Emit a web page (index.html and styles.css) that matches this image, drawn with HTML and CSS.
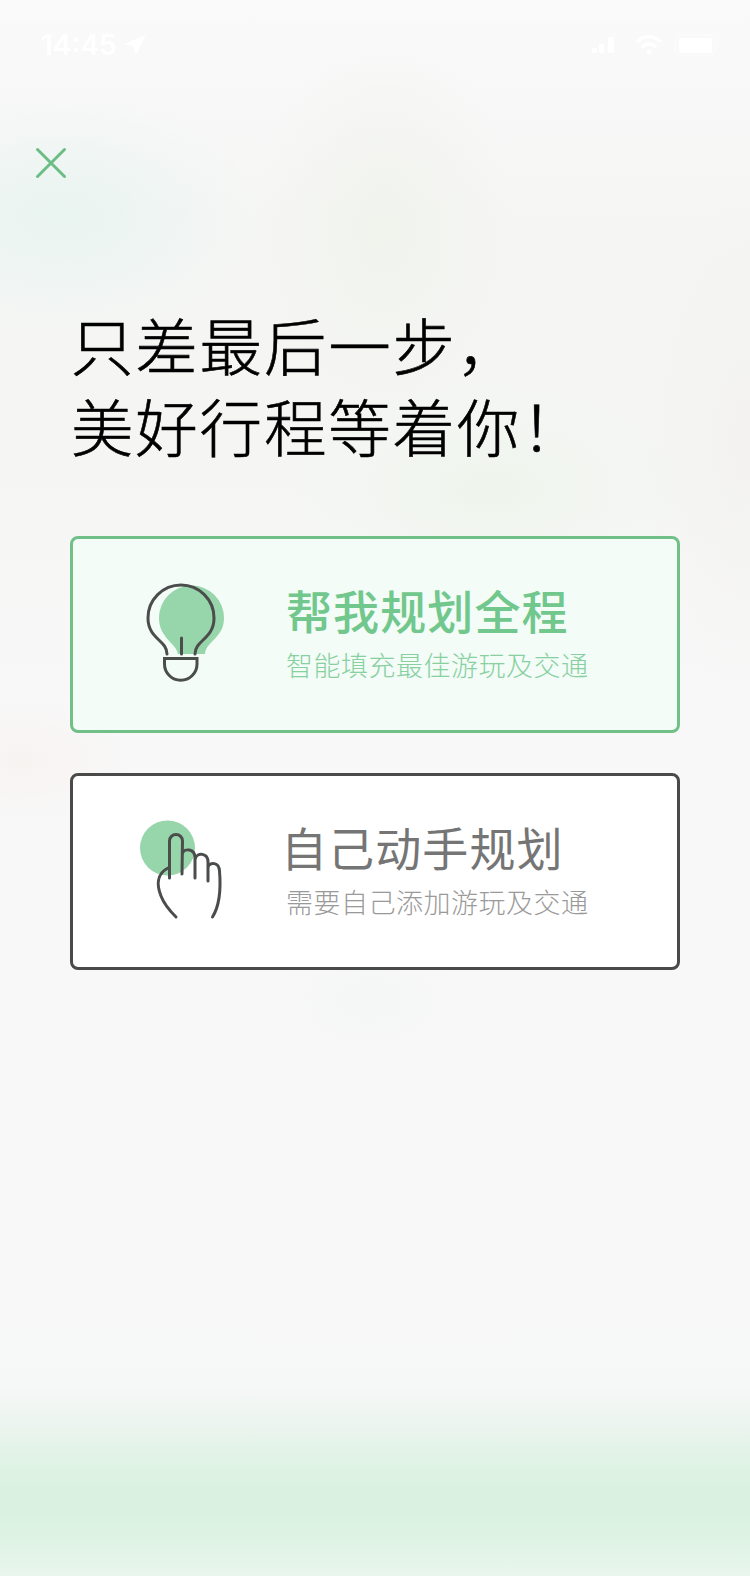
FILE: index.html
```html
<!DOCTYPE html>
<html lang="zh-CN">
<head>
    <meta charset="UTF-8">
    <meta name="viewport" content="width=device-width, initial-scale=1.0">
    <title>行程规划</title>
    <link rel="stylesheet" href="styles.css">
</head>
<body>
    <div class="page">
        <header class="status-bar">
            <div class="status-left">
                <span class="time">14:45</span>
                <svg class="location" width="22" height="21" viewBox="0 0 22 21">
                    <path d="M22 0 L0 9 L9 11 L12 20 Z" fill="#fff"/>
                </svg>
            </div>
            <div class="status-right">
                <svg width="26" height="16" viewBox="0 0 26 16" fill="#fff">
                    <rect x="0" y="11" width="5" height="5" rx="1"/>
                    <rect x="7" y="7" width="5" height="9" rx="1"/>
                    <rect x="16" y="0" width="6" height="16" rx="1"/>
                </svg>
                <svg width="26" height="20" viewBox="0 0 26 20" fill="none" stroke="#fff" stroke-width="3.5">
                    <path d="M1 7 Q13 -4 25 7"/>
                    <path d="M6 12 Q13 6 20 12"/>
                    <circle cx="13" cy="17" r="1.5" fill="#fff" stroke-width="2"/>
                </svg>
                <svg class="battery" width="46" height="22" viewBox="0 0 46 22">
                    <rect x="1" y="1" width="40" height="20" rx="5" fill="none" stroke="#fbfbfb" stroke-width="2"/>
                    <rect x="5" y="4" width="33" height="15" rx="2" fill="#fff"/>
                    <rect x="43" y="8" width="2" height="6" rx="1" fill="#fbfbfb"/>
                </svg>
            </div>
        </header>

        <button class="close" aria-label="关闭">
            <svg width="32" height="32" viewBox="0 0 32 32" fill="none" stroke="#6bbd85" stroke-width="3" stroke-linecap="round">
                <path d="M2.5 2.5 L29.5 29.5 M29.5 2.5 L2.5 29.5"/>
            </svg>
        </button>

        <h1>只差最后一步，<br>美好行程等着你！</h1>

        <div class="options">
            <div class="card active">
                <svg class="icon" width="100" height="110" viewBox="0 0 100 110" fill="none">
                    <!-- 灯泡 -->
                    <path d="M42 77 C41 67 23 61 23 41 A32.5 32.5 0 0 1 88 41 C88 61 70 64 69 77 Z" fill="#97d5aa"/>
                    <path d="M31 77 C31 63 12 62 12 41 A33 33 0 0 1 78 41 C78 62 59 63 59 77" stroke="#4a4d4b" stroke-width="3" stroke-linecap="round"/>
                    <path d="M45.500 61 V77" stroke="#4a4d4b" stroke-width="3" stroke-linecap="round"/>
                    <path d="M28.500 81.500 H61 V87 A16.250 16.250 0 0 1 28.500 87 Z" fill="#f3fcf7" stroke="#4a4d4b" stroke-width="3"/>
                </svg>
                <div class="card-text">
                    <h2>帮我规划全程</h2>
                    <p>智能填充最佳游玩及交通</p>
                </div>
            </div>

            <div class="card manual">
                <svg class="icon" width="100" height="110" viewBox="0 0 100 110" fill="none">
                    <!-- 手指 -->
                    <circle cx="31.500" cy="38" r="27.500" fill="#97d5aa"/>
                    <g stroke="#4a4d4b" stroke-width="3" stroke-linecap="round">
                        <path d="M33.500 68 V31 A6.500 6.500 0 0 1 46.500 31 L46 64"/>
                        <path d="M46.500 43 C48 38.500 59 38 59 48 V68"/>
                        <path d="M59.500 48 C61 42.500 72 42.500 72 52 V71"/>
                        <path d="M72.500 56 C74 52.500 83 51.500 83.500 61 C85 79 84 95 76.500 107"/>
                        <path d="M32 58 C20 64 21 76 25 86 C28 94 33 100 40 107"/>
                    </g>
                </svg>
                <div class="card-text">
                    <h2>自己动手规划</h2>
                    <p>需要自己添加游玩及交通</p>
                </div>
            </div>
        </div>
    </div>
</body>
</html>
```
FILE: styles.css
```css
* {
    box-sizing: border-box;
}

body {
    margin: 0;
    font-family: 'Noto Sans CJK SC', sans-serif;
    background-color: #f8f8f8;
}

.page {
    height: 1576px;
    overflow: hidden;
    background:
        linear-gradient(to bottom, rgba(237, 245, 240, 0) 1385px, #edf5f0 1420px, #e1f3e7 1455px, #daf1e1 1490px, #daf1e1 1515px, #e0f3e6 1545px, #e9f6ed 1576px),
        radial-gradient(ellipse 200px 120px at 60px 215px, #e9f4f1, rgba(233, 244, 241, 0)),
        radial-gradient(ellipse 130px 190px at 385px 230px, #f1f3ed, rgba(241, 243, 237, 0)),
        radial-gradient(ellipse 200px 110px at 490px 490px, rgba(238, 245, 236, 0.9), rgba(238, 245, 236, 0)),
        radial-gradient(ellipse 110px 250px at 750px 440px, #f3f2f1, rgba(243, 242, 241, 0)),
        radial-gradient(ellipse 110px 60px at 20px 760px, #f8f3f1, rgba(248, 243, 241, 0)),
        radial-gradient(ellipse 90px 60px at 370px 1000px, #f4f7f5, rgba(244, 247, 245, 0)),
        linear-gradient(to bottom, #fafafa 0, #f8f8f8 100px, #f5f6f4 220px, #f5f6f4 480px, #f8f8f8 700px, #f8f8f8 1300px, #f6f8f7 1400px);
}

.status-bar {
    display: flex;
    justify-content: space-between;
    height: 147px;
    padding: 33px 30px 0 41px;
}

.status-left,
.status-right {
    display: flex;
    align-items: center;
    height: 24px;
}

.time {
    width: 76px;
    font-family: Inter, sans-serif;
    font-size: 28px;
    font-weight: 600;
    line-height: 24px;
    color: #fff;
}

.location {
    margin-left: 7px;
}

.status-right {
    gap: 18px;
}

.battery {
    margin-left: -6px;
}

.close {
    display: block;
    width: 32px;
    height: 32px;
    margin-left: 35px;
    padding: 0;
    border: 0;
    background: none;
    cursor: pointer;
}

.close svg {
    display: block;
}

h1 {
    margin: 124px 0 0 71px;
    font-size: 62.5px;
    font-weight: 300;
    line-height: 81px;
    letter-spacing: 1.8px;
    color: #000;
    -webkit-text-stroke: 0.6px #000;
}

.options {
    display: flex;
    flex-direction: column;
    gap: 40px;
    margin: 71px 70px 0;
}

.card {
    display: flex;
    height: 197px;
    padding: 34px 0 0 63px;
    border: 3px solid #4a4a4a;
    border-radius: 8px;
    background: #fff;
    cursor: pointer;
}

.card.active {
    border-color: #71c088;
    background: #f3fcf7;
}

.icon {
    flex: none;
}

.active .icon {
    margin-top: 4px;
}

.card-text {
    margin: 6px 0 0 50px;
}

h2 {
    margin: 0;
    font-size: 46px;
    font-weight: 500;
    line-height: 60px;
    letter-spacing: 1.1px;
    color: #71c78c;
}

.card-text p {
    margin: 6px 0 0;
    font-size: 27px;
    font-weight: 300;
    line-height: 40px;
    letter-spacing: 0.5px;
    color: #88d0a0;
}

.manual h2 {
    margin-left: -5px;
    font-weight: 400;
    color: #757575;
}

.manual p {
    color: #9a9a9a;
}
```
